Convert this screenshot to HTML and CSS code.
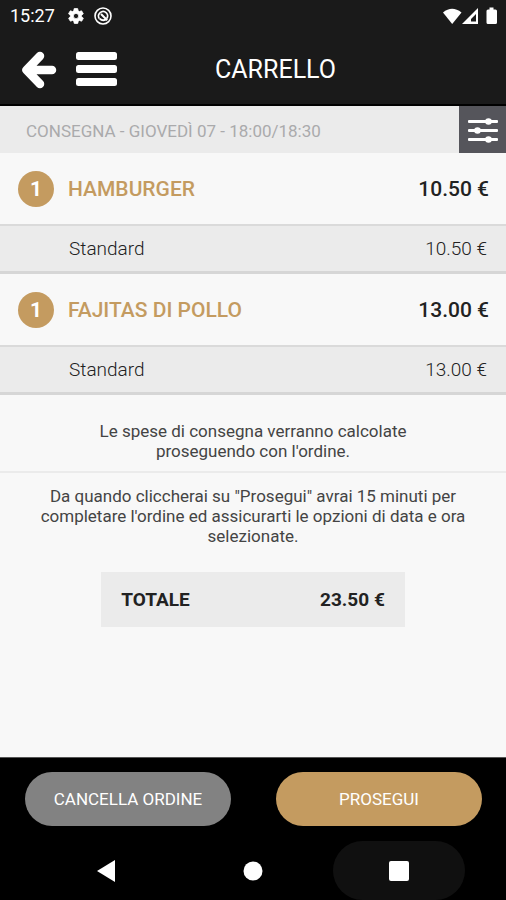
FILE: index.html
```html
<!DOCTYPE html>
<html lang="it">
<head>
<meta charset="utf-8">
<meta name="viewport" content="width=device-width, initial-scale=1">
<title>Carrello</title>
<link rel="stylesheet" href="styles.css">
</head>
<body>
<div class="screen">
  <div class="status">
    <span class="clock">15:27</span>
    <svg class="status-icon" width="18" height="18" viewBox="0 0 24 24" aria-hidden="true"><path fill="#fff" fill-rule="evenodd" stroke="#fff" d="M19.4 13c.1-.6.1-1.300 0-2l2.100-1.600c.2-.2.3-.4.100-.700l-2-3.400c-.1-.2-.4-.3-.6-.2l-2.500 1c-.5-.4-1.100-.700-1.700-1l-.4-2.600c0-.3-.2-.5-.5-.5h-4c-.3 0-.5.2-.5.5L9 5.100c-.6.3-1.200.6-1.700 1l-2.500-1c-.2-.1-.5 0-.6.200l-2 3.400c-.1.300-.1.500.1.700L4.500 11c-.1.700-.1 1.400 0 2l-2.100 1.600c-.2.200-.3.400-.1.700l2 3.400c.1.200.4.300.6.200l2.500-1c.5.400 1.100.7 1.700 1l.4 2.600c0 .3.200.5.500.5h4c.3 0 .5-.2.500-.5l.4-2.600c.6-.3 1.200-.6 1.700-1l2.500 1c.2.100.5 0 .6-.2l2-3.400c.1-.3.100-.5-.1-.7zM12 15.500a3.500 3.500 0 1 1 0-7 3.500 3.500 0 0 1 0 7z"/></svg>
    <svg class="status-icon" width="18" height="18" viewBox="0 0 18 18" fill="none" stroke="#fff" aria-hidden="true"><circle cx="9" cy="9" r="8" stroke-width="1.600"/><path stroke-width="1.600" d="M5.400 11.800A4.600 4.600 0 0 1 12.300 5.800A4.600 4.600 0 0 1 12.600 11.700"/><path stroke-width="2" d="M7 7L13.200 13.200M5.800 11.600Q8 14 11.500 12.800"/></svg>
    <svg class="signals" width="56" height="20" viewBox="0 0 56 20" aria-hidden="true">
      <path fill="#fff" d="M1 6.500Q10 -1 19.500 6.500L10.200 18z"/>
      <path fill="#fff" fill-rule="evenodd" d="M20 18L36 2v16zM29 15.500h5V8l-5 5z"/>
      <path fill="#fff" d="M47.500 1.500h4v2h2q1.500 0 1.500 1.500v11.500q0 1.500-1.500 1.500h-7.500q-1.500 0-1.500-1.500V5q0-1.500 1.500-1.500h1.500z"/>
    </svg>
  </div>
  <header class="header">
    <div class="header-side">
      <button class="icon-button" type="button" aria-label="Indietro">
        <svg width="36" height="38" viewBox="0 0 36 38" fill="none" stroke="#fff" stroke-width="8.500" stroke-linecap="round" stroke-linejoin="round" aria-hidden="true"><path d="M19 5L5.500 19L19 33M7 19H31"/></svg>
      </button>
      <button class="icon-button" type="button" aria-label="Menu">
        <svg width="42" height="36" viewBox="0 0 42 36" fill="#fff" aria-hidden="true"><rect x="0" y="0" width="41" height="8" rx="2.500"/><rect x="0" y="13" width="41" height="8" rx="2.500"/><rect x="0" y="26" width="41" height="8" rx="2.500"/></svg>
      </button>
    </div>
    <h1 class="title">CARRELLO</h1>
  </header>
  <main class="content">
    <div class="slot">
      <span class="slot-text">CONSEGNA - GIOVEDÌ 07 - 18:00/18:30</span>
      <button class="options" type="button" aria-label="Opzioni">
        <svg width="30" height="28" viewBox="0 0 30 28" fill="#fff" aria-hidden="true"><rect y="4" width="30" height="3" rx="1"/><rect y="13" width="30" height="3" rx="1"/><rect y="22" width="30" height="3" rx="1"/><circle cx="20.500" cy="5.500" r="3.300"/><circle cx="9.500" cy="14.500" r="3.300"/><circle cx="20.500" cy="23.500" r="3.300"/></svg>
      </button>
    </div>
    <section>
      <div class="item"><span class="badge">1</span><h2 class="name">HAMBURGER</h2><span class="price">10.50 €</span></div>
      <div class="variant"><span>Standard</span><span>10.50 €</span></div>
    </section>
    <section>
      <div class="item"><span class="badge">1</span><h2 class="name">FAJITAS DI POLLO</h2><span class="price">13.00 €</span></div>
      <div class="variant"><span>Standard</span><span>13.00 €</span></div>
    </section>
    <p class="note note-delivery">Le spese di consegna verranno calcolate<br>proseguendo con l'ordine.</p>
    <p class="note note-time">Da quando cliccherai su "Prosegui" avrai 15 minuti per<br>completare l'ordine ed assicurarti le opzioni di data e ora<br>selezionate.</p>
    <div class="total"><span>TOTALE</span><span>23.50 €</span></div>
  </main>
  <footer class="footer">
    <div class="actions">
      <button class="action cancel" type="button">CANCELLA ORDINE</button>
      <button class="action proceed" type="button">PROSEGUI</button>
    </div>
    <nav class="system-nav">
      <button class="nav-button" type="button" aria-label="Indietro (sistema)"><svg width="20" height="22" viewBox="0 0 20 22" aria-hidden="true"><path fill="#fff" d="M18 0v22L0 11z"/></svg></button>
      <button class="nav-button" type="button" aria-label="Home"><svg width="20" height="20" viewBox="0 0 20 20" aria-hidden="true"><circle cx="10" cy="10" r="9.500" fill="#fff"/></svg></button>
      <button class="nav-button pressed" type="button" aria-label="App recenti"><svg width="20" height="20" viewBox="0 0 20 20" aria-hidden="true"><rect width="20" height="20" rx="2" fill="#fff"/></svg></button>
    </nav>
  </footer>
</div>
</body>
</html>
```
FILE: styles.css
```css
* { box-sizing: border-box; }
body {
  margin: 0;
  background: #f8f8f8;
  color: #222;
  font-family: Roboto, "Liberation Sans", sans-serif;
}
h1, h2, p { margin: 0; }
button {
  border: 0;
  padding: 0;
  background: none;
  color: inherit;
  font-family: inherit;
  display: flex;
  align-items: center;
  justify-content: center;
}
svg { display: block; }
.screen {
  min-height: 100vh;
  display: flex;
  flex-direction: column;
}
.status {
  height: 32px;
  padding: 0 8px 0 10px;
  display: flex;
  align-items: center;
  gap: 9px;
  background: #1a1a1a;
  color: #fff;
}
.clock { font-size: 18px; line-height: 20px; margin-right: 3px; }
.signals { margin-left: auto; }
.header {
  height: 74px;
  padding: 4px 20px 0;
  display: grid;
  grid-template-columns: 1fr auto 1fr;
  align-items: center;
  background: #1a1a1a;
  border-bottom: 2px solid #000;
  color: #fff;
}
.header-side { display: flex; align-items: center; gap: 19px; padding-left: 1px; }
.title {
  grid-column: 2;
  padding-left: 45px;
  font-size: 25px;
  line-height: 32px;
  font-weight: 400;
}
.slot {
  height: 47px;
  display: flex;
  align-items: stretch;
  background: #ebebeb;
  color: #aaaaac;
}
.slot-text { flex: 1; padding-left: 26px; font-size: 17px; line-height: 50px; }
.options { width: 47px; background: #55555b; }
.item {
  height: 71px;
  padding: 0 17px 0 18px;
  display: flex;
  align-items: center;
  font-size: 21px;
  line-height: 24px;
}
.badge {
  width: 36px;
  height: 36px;
  border-radius: 50%;
  background: #c49b60;
  color: #fff;
  line-height: 36px;
  font-weight: 700;
  text-align: center;
}
.name {
  flex: 1;
  margin-left: 14px;
  font-size: inherit;
  font-weight: 500;
  color: #c49b60;
}
.price { font-weight: 500; }
.variant {
  height: 50px;
  padding: 0 19px 0 69px;
  display: flex;
  align-items: center;
  justify-content: space-between;
  background: #ebebeb;
  border-top: 2px solid #dadada;
  border-bottom: 3px solid #d6d6d6;
  font-size: 19px;
  line-height: 24px;
  font-weight: 300;
}
.note {
  font-size: 17px;
  line-height: 20px;
  text-align: center;
  color: #444;
}
.note-delivery { padding: 26px 20px 10px; border-bottom: 2px solid #ebebeb; }
.note-time { padding: 13px 20px 26px; }
.total {
  width: 60%;
  height: 55px;
  margin: 0 auto;
  padding: 0 20px;
  display: flex;
  align-items: center;
  justify-content: space-between;
  background: #ebebeb;
  font-size: 19px;
  line-height: 24px;
  font-weight: 700;
}
.content { flex: 1; }
.footer { background: #000; color: #fff; border-top: 1px solid #555; }
.actions { display: flex; gap: 45px; padding: 14px 24px 0 25px; }
.action {
  flex: 1;
  height: 54px;
  border-radius: 27px;
  font-size: 17px;
  line-height: 20px;
}
.cancel { background: #828282; }
.proceed { background: #c49b60; }
.system-nav {
  display: flex;
  justify-content: center;
  gap: 14px;
  padding-top: 15px;
}
.nav-button { width: 132px; height: 59px; border-radius: 30px; }
.pressed { background: #101010; }
```
